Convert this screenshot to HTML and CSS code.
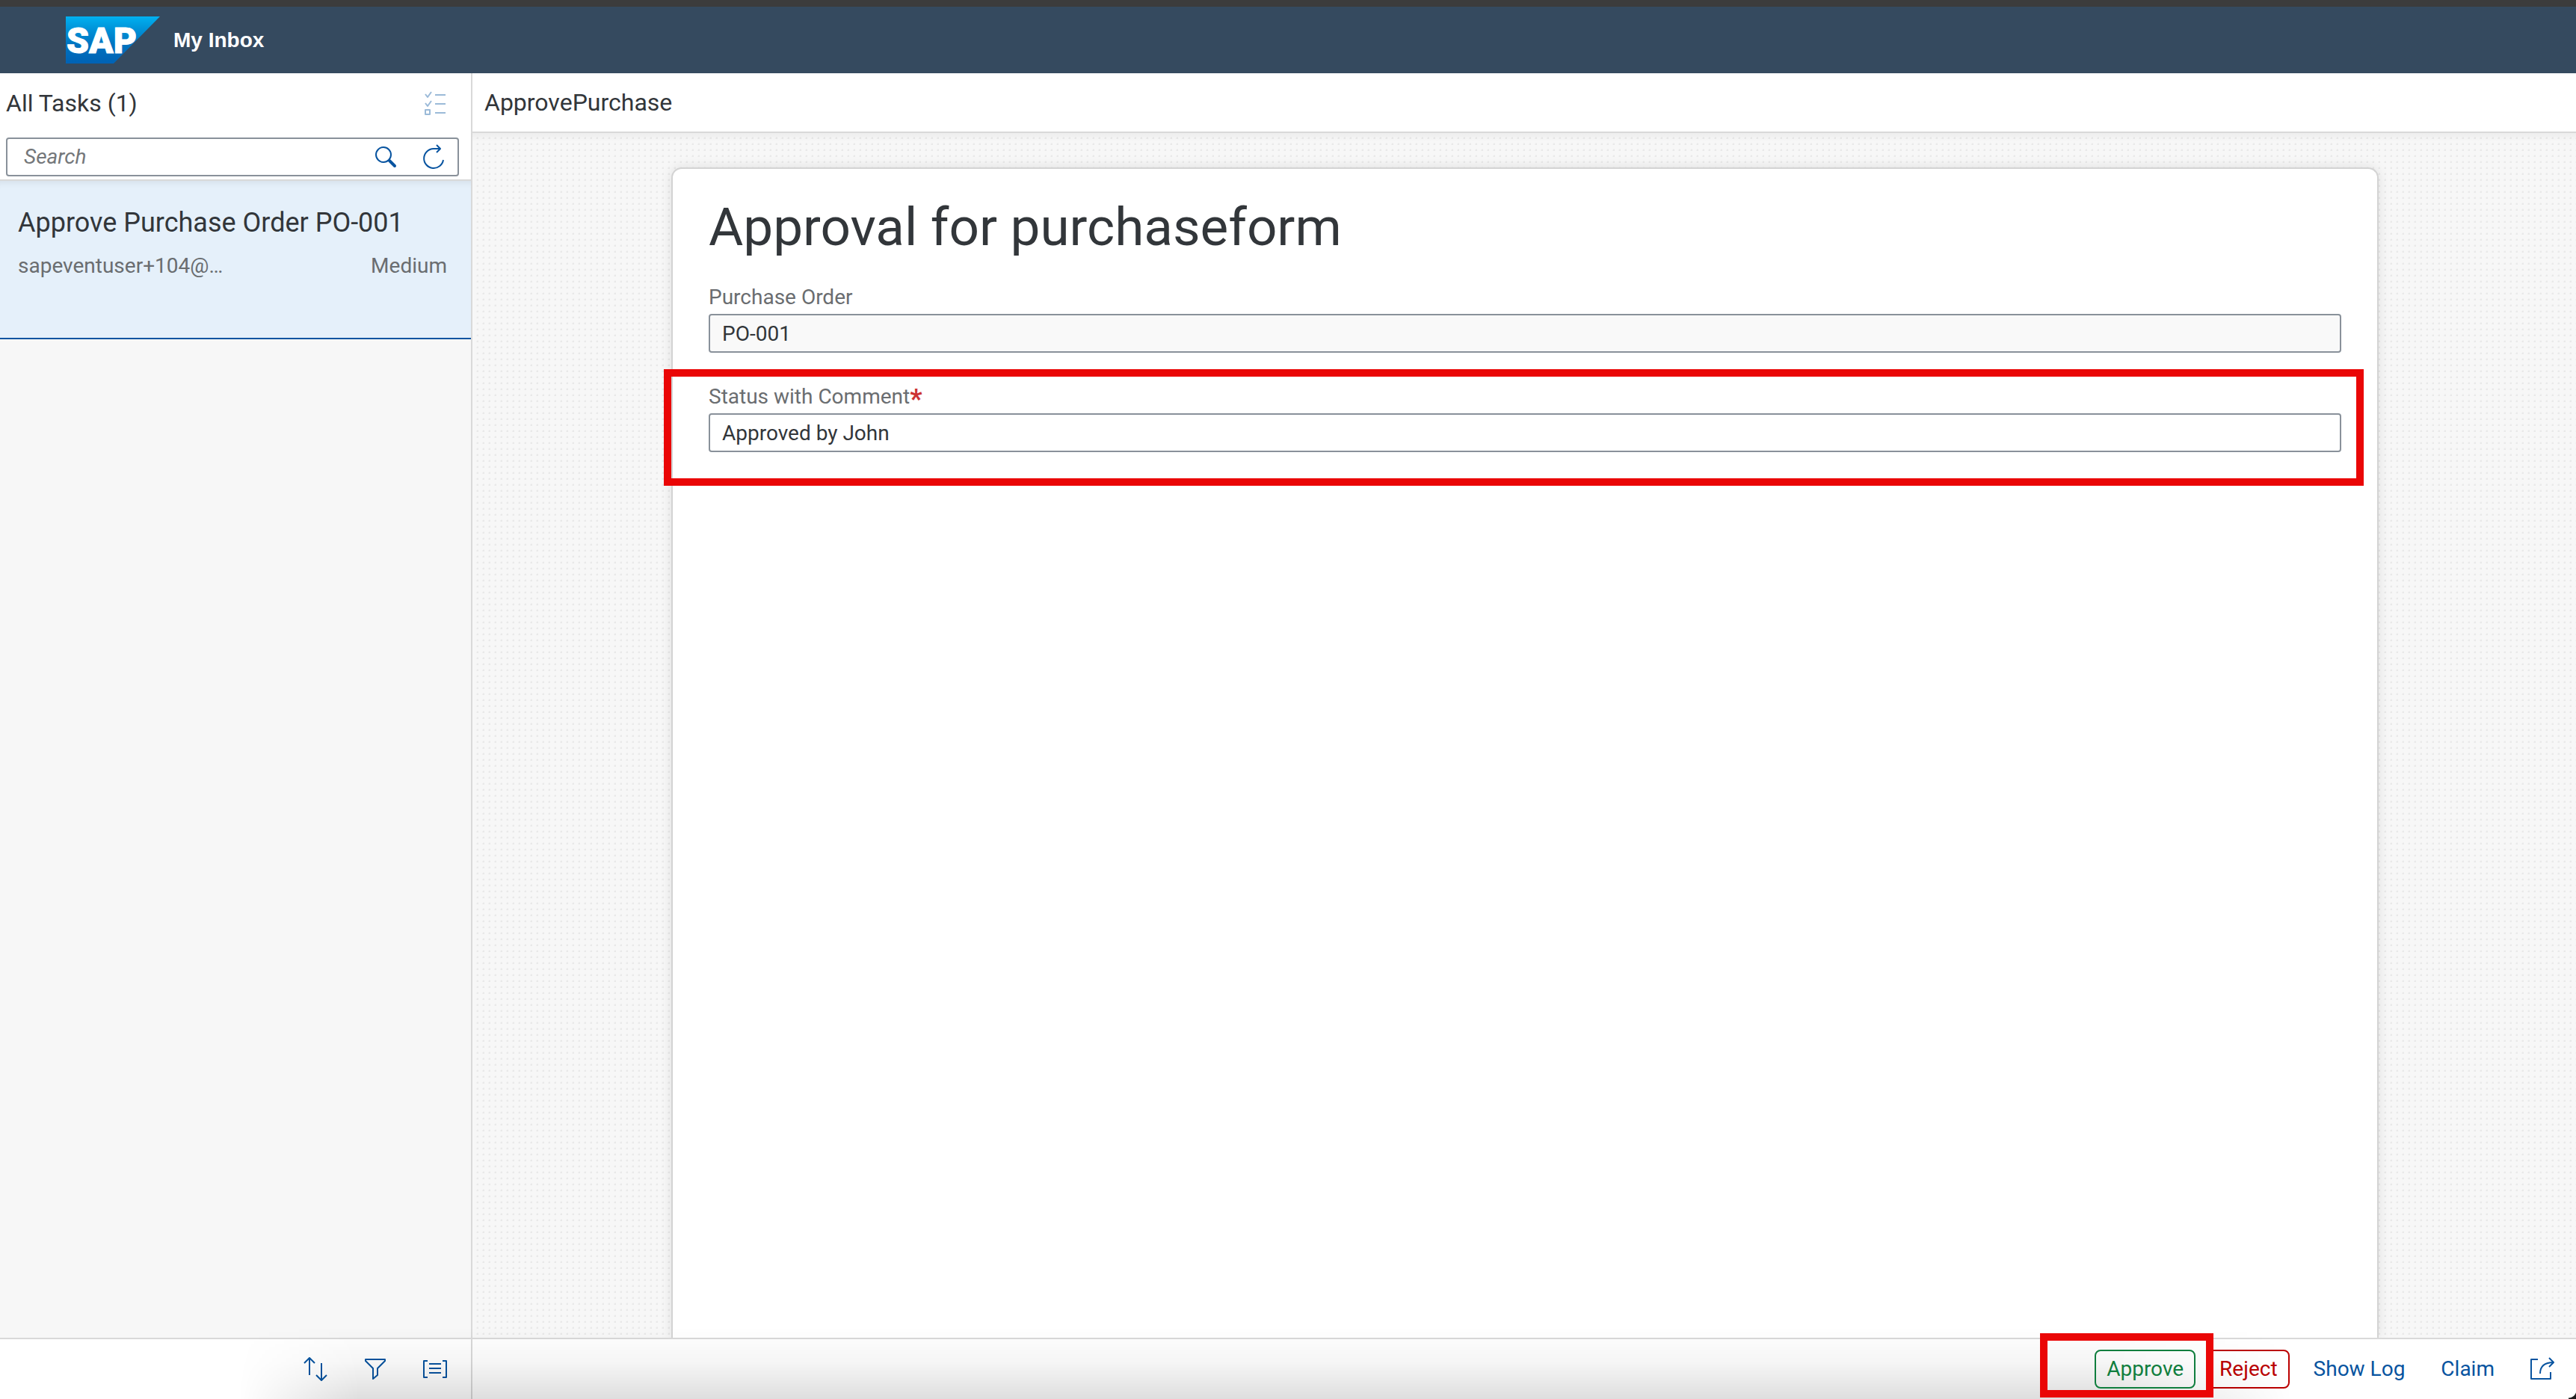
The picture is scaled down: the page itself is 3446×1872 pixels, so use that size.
FILE: index.html
```html
<!DOCTYPE html>
<html lang="en">
<head>
  <meta charset="utf-8">
  <title>My Inbox</title>
  <link rel="stylesheet" href="styles.css">
</head>
<body>
  <header class="shell">
    <svg class="shell-logo" viewBox="0 0 126 63" role="img" aria-label="SAP">
      <defs>
        <linearGradient id="logo-fill" x1="0" y1="0" x2="0" y2="1">
          <stop offset="0" stop-color="#00b1f1"/>
          <stop offset=".25" stop-color="#0095da"/>
          <stop offset=".6" stop-color="#0073c0"/>
          <stop offset="1" stop-color="#0062b4"/>
        </linearGradient>
      </defs>
      <path d="M0 0H126L64 63H0Z" fill="url(#logo-fill)"/>
      <text class="logo-text" x="1" y="49">SAP</text>
    </svg>
    <h1 class="shell-title">My Inbox</h1>
  </header>

  <div class="app">
    <aside class="master">
      <div class="master-head">
        <div class="master-title-row">
          <h2 class="bar-title">All Tasks (1)</h2>
          <button class="icon-plain" type="button" aria-label="Select multiple" disabled>
            <svg class="icon" width="28" height="32" viewBox="0 0 28 32">
              <path d="M1 4L4 8L9 1M1 16L4 20L9 13M14 5H28M14 17H28M14 29H28M1 25H7V31H1Z"/>
            </svg>
          </button>
        </div>
        <form class="search">
          <input class="search-input" type="search" placeholder="Search" aria-label="Search">
          <button class="icon-plain" type="button" aria-label="Search tasks">
            <svg class="icon" width="32" height="32" viewBox="0 0 32 32">
              <circle cx="13" cy="13" r="10"/>
              <path class="thick" d="M21 21L28 28"/>
            </svg>
          </button>
          <button class="icon-plain" type="button" aria-label="Refresh">
            <svg class="icon" width="32" height="36" viewBox="0 0 32 36">
              <path d="M29 22A13 13 0 1 1 16 7H25M20 2L25 7L20 12"/>
            </svg>
          </button>
        </form>
      </div>

      <div class="task-list">
        <a class="task" href="#po-001">
          <span class="task-title">Approve Purchase Order PO-001</span>
          <span class="task-meta">
            <span>sapeventuser+104@…</span>
            <span>Medium</span>
          </span>
        </a>
      </div>

      <footer class="bar-foot master-foot">
        <button class="icon-btn" type="button" aria-label="Sort">
          <svg class="icon" width="32" height="32" viewBox="0 0 32 32">
            <path d="M8 1V24M1 8L8 1L15 8M24 8V31M17 24L24 31L31 24"/>
          </svg>
        </button>
        <button class="icon-btn" type="button" aria-label="Filter">
          <svg class="icon" width="32" height="32" viewBox="0 0 32 32">
            <path d="M3 3H29V5L19 15V24L13 29V15L3 5Z"/>
          </svg>
        </button>
        <button class="icon-btn" type="button" aria-label="Group">
          <svg class="icon" width="32" height="32" viewBox="0 0 32 32">
            <path d="M6 5H1V27H6M26 5H31V27H26M8 9H24M8 15H24M8 21H24"/>
          </svg>
        </button>
      </footer>
    </aside>

    <main class="detail">
      <div class="detail-head">
        <h2 class="bar-title">ApprovePurchase</h2>
      </div>

      <div class="detail-body">
        <form class="card">
          <h3 class="card-title">Approval for purchaseform</h3>
          <div class="field">
            <label class="field-label" for="order">Purchase Order</label>
            <input class="field-input" id="order" type="text" value="PO-001" readonly>
          </div>
          <div class="field">
            <label class="field-label" for="status">Status with Comment<span class="required">*</span></label>
            <input class="field-input" id="status" type="text" value="Approved by John" required>
            <div class="mark mark-field"></div>
          </div>
        </form>
      </div>

      <footer class="bar-foot detail-foot">
        <div class="marked">
          <button class="btn btn-accept" type="button">Approve</button>
          <div class="mark mark-action"></div>
        </div>
        <button class="btn btn-reject" type="button">Reject</button>
        <button class="btn" type="button">Show Log</button>
        <button class="btn" type="button">Claim</button>
        <button class="icon-btn" type="button" aria-label="Share">
          <svg class="icon" width="32" height="32" viewBox="0 0 32 32">
            <path d="M10 3H1V29H27V20M13 22C13 12 19 7 31 7M25 1L31 7L25 13"/>
          </svg>
        </button>
      </footer>
    </main>
    <div class="dock-shade"></div>
    <div class="window-corner"></div>
  </div>
</body>
</html>
```
FILE: styles.css
```css
:root {
  --shell: #354a5f;
  --text: #32363a;
  --muted: #6a6d70;
  --link: #0854a0;
  --line: #d9d9d9;
  --field: #89919a;
  --mark: #ea0606;
}

* {
  box-sizing: border-box;
}

body {
  margin: 0;
  min-height: 100vh;
  display: flex;
  flex-direction: column;
  font: 28px/36px Roboto, "Liberation Sans", sans-serif;
  color: var(--text);
  background: #fff;
}

h1, h2, h3 {
  margin: 0;
  font-weight: 400;
}

button, input {
  font: inherit;
  color: inherit;
}

/* Shell bar */
.shell {
  display: flex;
  align-items: center;
  gap: 18px;
  height: 98px;
  padding-left: 88px;
  border-top: 9px solid #3c3c3c;
  background: var(--shell);
  color: #fff;
}

.shell-logo {
  width: 126px;
  height: 63px;
}

.logo-text {
  font: 900 48px Roboto, sans-serif;
  fill: #fff;
  stroke: #fff;
  stroke-width: 1;
}

.shell-title {
  font: 700 28px/36px "Liberation Sans", sans-serif;
}

/* Two-column frame */
.app {
  position: relative;
  flex: 1;
  display: grid;
  grid-template-columns: 632px 1fr;
}

.master, .detail {
  display: flex;
  flex-direction: column;
  min-width: 0;
}

.master {
  border-right: 2px solid var(--line);
}

.bar-title {
  font-size: 32px;
  line-height: 40px;
}

/* Task list column */
.master-head {
  padding: 0 16px 4px 8px;
  border-bottom: 2px solid var(--line);
}

.master-title-row {
  display: flex;
  align-items: center;
  justify-content: space-between;
  height: 86px;
  padding: 0 18px 6px 0;
}

.search {
  display: flex;
  align-items: center;
  gap: 32px;
  height: 52px;
  padding: 0 16px 0 22px;
  border: 2px solid var(--field);
  border-radius: 4px;
}

.search-input {
  flex: 1;
  min-width: 0;
  padding: 0;
  border: 0;
  outline: 0;
  background: none;
  appearance: none;
}

.search-input::placeholder {
  color: #74777a;
  font-style: italic;
}

.task-list {
  flex: 1;
  background: #f7f7f7;
}

.task {
  display: flex;
  flex-direction: column;
  gap: 18px;
  height: 212px;
  padding: 34px 32px 0 24px;
  border-bottom: 2px solid var(--link);
  background: #e5f0fa;
  box-shadow: inset 0 10px 10px -8px rgba(0, 0, 0, .08);
  color: inherit;
  text-decoration: none;
}

.task-title {
  font-size: 36px;
  line-height: 44px;
}

.task-meta {
  display: flex;
  justify-content: space-between;
  color: var(--muted);
}

/* Footer bars */
.bar-foot {
  display: flex;
  align-items: center;
  justify-content: flex-end;
  gap: 16px;
  height: 82px;
  border-top: 2px solid var(--line);
  background: #fff;
}

.master-foot {
  padding-right: 16px;
}

.detail-foot {
  padding-right: 13px;
}

/* Detail column */
.detail-head {
  display: flex;
  align-items: center;
  height: 80px;
  padding-left: 16px;
  border-bottom: 2px solid var(--line);
}

.detail-body {
  flex: 1;
  display: flex;
  padding: 46px 264px 0 266px;
  overflow: hidden;
  background:
    linear-gradient(rgba(0, 0, 0, .04), transparent 12px),
    radial-gradient(circle at 7px 7px, #e9e9e9 1px, transparent 2px) 0 0 / 8px 8px,
    #f7f7f7;
}

.card {
  flex: 1;
  padding: 36px 48px 0;
  border: 2px solid #d3d3d3;
  border-bottom: 0;
  border-radius: 14px 14px 0 0;
  background: #fff;
  box-shadow: 0 0 16px rgba(0, 0, 0, .1);
}

.card-title {
  margin-bottom: 34px;
  font-size: 71px;
  line-height: 84px;
}

.field {
  position: relative;
  display: flex;
  flex-direction: column;
  gap: 4px;
  margin-bottom: 41px;
}

.field-label {
  color: var(--muted);
}

.required {
  font-size: 36px;
  font-weight: 700;
  line-height: 20px;
  vertical-align: -6px;
  color: #cc3333;
}

.field-input {
  width: 100%;
  height: 52px;
  padding: 0 16px;
  border: 2px solid var(--field);
  border-radius: 4px;
  outline: 0;
  background: #fff;
}

.field-input:read-only {
  background: #f9f9f9;
}

/* Buttons */
.btn {
  height: 52px;
  padding: 0 14px;
  border: 2px solid transparent;
  border-radius: 8px;
  background: none;
  color: var(--link);
}

.btn-accept {
  border-color: #107e3e;
  color: #107e3e;
}

.btn-reject {
  border-color: #bb0000;
  color: #bb0000;
}

.icon-btn, .icon-plain {
  display: flex;
  align-items: center;
  justify-content: center;
  padding: 0;
  border: 0;
  background: none;
  color: var(--link);
}

.icon-btn {
  width: 64px;
  height: 52px;
}

.icon-plain:disabled {
  opacity: .4;
}

.icon {
  display: block;
  fill: none;
  stroke: currentColor;
  stroke-width: 2;
  stroke-linejoin: round;
}

.thick {
  stroke-width: 4;
  stroke-linecap: round;
}

/* Red callout frames */
.mark {
  position: absolute;
  border: 10px solid var(--mark);
  pointer-events: none;
}

.mark-field {
  inset: -19px -30px -45px -60px;
}

.marked {
  position: relative;
  z-index: 2;
}

.mark-action {
  inset: -22px -24px -12px -73px;
}

/* Soft shade rising from the bottom edge of the window */
.dock-shade {
  position: absolute;
  inset: auto 380px 0 320px;
  height: 96px;
  background: linear-gradient(transparent, rgba(0, 0, 0, .04) 50%, rgba(0, 0, 0, .13));
  mask-image: linear-gradient(90deg, transparent, #000 160px, #000 calc(100% - 240px), transparent);
  pointer-events: none;
}

.window-corner {
  position: absolute;
  right: 0;
  bottom: 0;
  width: 10px;
  height: 12px;
  background: radial-gradient(circle at 0 0, transparent 10px, #1c1c1c 11px);
}
```
